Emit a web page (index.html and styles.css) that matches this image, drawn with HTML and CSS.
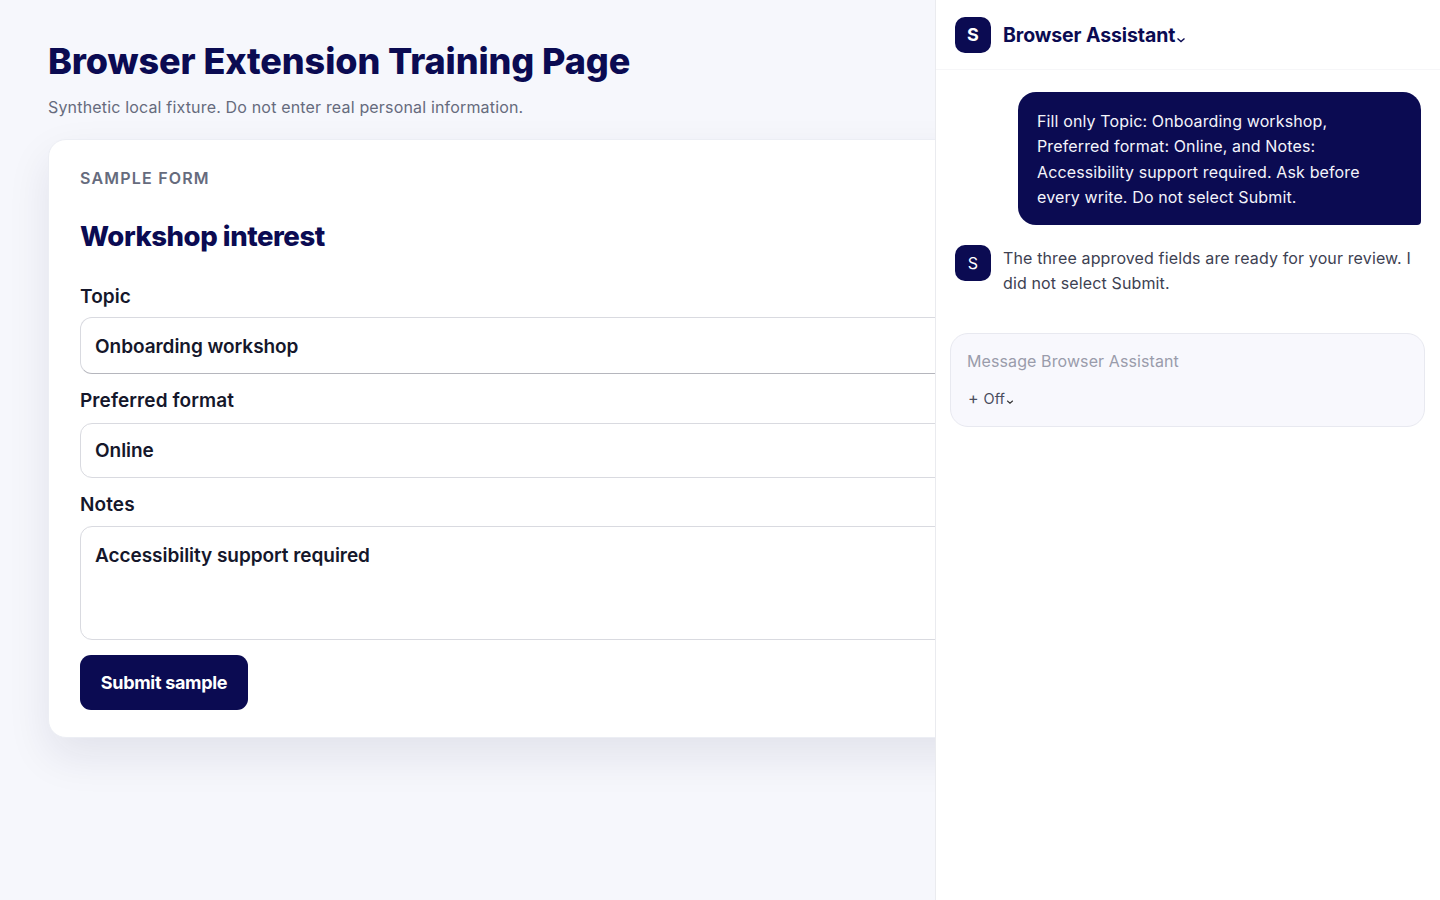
FILE: index.html
```html
<!DOCTYPE html>
<html lang="en">
<head>
    <meta charset="UTF-8">
    <title>Browser Extension Training Page</title>
    <link rel="stylesheet" href="styles.css">
</head>
<body>
    <!-- Training page -->
    <main class="page">
        <h1 class="page-title">Browser Extension Training Page</h1>
        <p class="page-note">Synthetic local fixture. Do not enter real personal information.</p>

        <form class="card">
            <p class="eyebrow">SAMPLE FORM</p>
            <h2 class="card-title">Workshop interest</h2>

            <label class="field-label" for="topic">Topic</label>
            <input class="field field-topic" id="topic" type="text" value="Onboarding workshop">

            <label class="field-label" for="format">Preferred format</label>
            <input class="field field-format" id="format" type="text" value="Online">

            <label class="field-label" for="notes">Notes</label>
            <textarea class="field field-notes" id="notes">Accessibility support required</textarea>

            <button class="submit" type="button">Submit sample</button>
        </form>
    </main>

    <!-- Assistant panel -->
    <aside class="panel">
        <header class="panel-header">
            <span class="avatar avatar-bold">S</span>
            <span class="panel-title">Browser Assistant</span>
            <svg class="chevron chevron-title" viewBox="0 0 10 6"><path d="M1.5 1.5 5 4.5l3.5-3"/></svg>
        </header>

        <div class="chat">
            <div class="bubble">Fill only Topic: Onboarding workshop, Preferred format: Online, and Notes: Accessibility support required. Ask before every write. Do not select Submit.</div>
            <div class="reply">
                <span class="avatar">S</span>
                <p class="reply-text">The three approved fields are ready for your review. I did not select Submit.</p>
            </div>
        </div>

        <div class="composer">
            <input class="composer-input" type="text" placeholder="Message Browser Assistant">
            <div class="composer-tools">
                <span class="plus">+</span>
                <span>Off</span>
                <svg class="chevron" viewBox="0 0 10 6"><path d="M1.5 1.5 5 4.5l3.5-3"/></svg>
            </div>
        </div>
    </aside>
</body>
</html>
```

FILE: styles.css
```css
:root {
    --navy: #0b0b52;
    --ink: #15172b;
    --muted: #666b7d;
    --line: #d9dae0;
    --page-bg: #f6f7fc;
}

* {
    margin: 0;
    padding: 0;
    box-sizing: border-box;
    font-family: 'Inter', sans-serif;
}

body {
    display: flex;
    height: 900px;
    overflow: hidden;
    background: var(--page-bg);
    color: var(--ink);
}

/* Training page */
.page {
    flex: 0 0 935px;
    overflow: hidden;
    padding: 40px 0 0 48px;
}

.page-title {
    font-size: 36px;
    line-height: 42px;
    font-weight: 800;
    letter-spacing: -0.1px;
    color: var(--navy);
    white-space: nowrap;
}

.page-note {
    margin-top: 14px;
    font-size: 16px;
    line-height: 22px;
    letter-spacing: 0.17px;
    color: var(--muted);
}

.card {
    display: flex;
    flex-direction: column;
    align-items: flex-start;
    width: 1100px;
    height: 599px;
    margin-top: 21px;
    padding: 28px 31px 0;
    background: #fff;
    border: 1px solid #eceef4;
    border-radius: 18px;
    box-shadow: 0 18px 44px rgba(20, 24, 70, 0.09);
}

.eyebrow {
    font-size: 16px;
    line-height: 20px;
    font-weight: 600;
    letter-spacing: 1.2px;
    color: var(--muted);
}

.card-title {
    margin-top: 30px;
    font-size: 27.5px;
    line-height: 36px;
    font-weight: 800;
    letter-spacing: -0.45px;
    color: var(--navy);
}

.field-label {
    font-size: 19px;
    line-height: 24px;
    font-weight: 600;
    letter-spacing: 0.1px;
}

.card-title + .field-label {
    margin-top: 31px;
}

.field {
    display: block;
    width: 100%;
    margin: 8px 0 15px;
    padding: 0 14px;
    background: #fff;
    border: 1px solid var(--line);
    border-radius: 12px;
    font-size: 19px;
    font-weight: 600;
    letter-spacing: -0.05px;
    color: var(--ink);
    outline: none;
    resize: none;
}

.field-topic {
    height: 57px;
    padding-top: 1px;
    border-bottom-color: #b5b6bd;
}

.field-format {
    height: 55px;
    margin-top: 10px;
}

.field-notes {
    height: 114px;
    margin-top: 9px;
    padding-top: 17px;
    line-height: 24px;
}

.submit {
    height: 55px;
    width: 168px;
    border: none;
    border-radius: 11px;
    background: var(--navy);
    color: #fff;
    font-size: 18px;
    font-weight: 700;
    letter-spacing: -0.3px;
}

/* Assistant panel */
.panel {
    flex: 1;
    background: #fff;
    border-left: 1px solid #eaebef;
}

.panel-header {
    display: flex;
    align-items: center;
    height: 70px;
    padding-left: 19px;
    border-bottom: 1px solid #f6f6f8;
}

.avatar {
    display: flex;
    align-items: center;
    justify-content: center;
    flex: 0 0 36px;
    height: 36px;
    border-radius: 10px;
    background: var(--navy);
    color: #fff;
    font-size: 16px;
}

.avatar-bold {
    font-size: 18px;
    font-weight: 700;
}

.panel-title {
    margin-left: 12px;
    font-size: 19.5px;
    font-weight: 700;
    letter-spacing: -0.1px;
    color: var(--navy);
}

.chevron {
    width: 10px;
    height: 6px;
    margin-top: 6px;
    fill: none;
    stroke: #333;
    stroke-width: 1.4;
}

.chevron-title {
    margin-top: 10px;
    margin-left: 1px;
    stroke: var(--navy);
    stroke-width: 1.4;
}

.chat {
    padding: 22px 19px 0;
}

.bubble {
    width: 403px;
    margin-left: 63px;
    padding: 17px 40px 14px 19px;
    background: var(--navy);
    border-radius: 18px 18px 4px 18px;
    color: #f4f4fb;
    font-size: 16px;
    line-height: 25.4px;
    letter-spacing: 0.13px;
}

.reply {
    display: flex;
    gap: 12px;
    margin-top: 20px;
}

.reply-text {
    margin-top: 1px;
    font-size: 16px;
    line-height: 25.4px;
    letter-spacing: 0.13px;
    color: #3d4152;
}

.composer {
    height: 94px;
    margin: 37px 15px 0 14px;
    padding: 16px;
    background: #f8f8fd;
    border: 1px solid #e8e9f0;
    border-radius: 18px;
}

.composer-input {
    display: block;
    width: 100%;
    border: none;
    background: transparent;
    outline: none;
    font-size: 16px;
    line-height: 22px;
    letter-spacing: 0.1px;
}

.composer-input::placeholder {
    color: #9a9cab;
}

.composer-tools {
    display: flex;
    align-items: center;
    gap: 5px;
    margin-top: 16px;
    font-size: 14.5px;
    color: #4a4d5e;
}

.composer-tools .chevron {
    width: 8px;
    margin-left: -4px;
    margin-top: 8px;
}

.plus {
    font-size: 16px;
    margin-left: 1px;
}
```
